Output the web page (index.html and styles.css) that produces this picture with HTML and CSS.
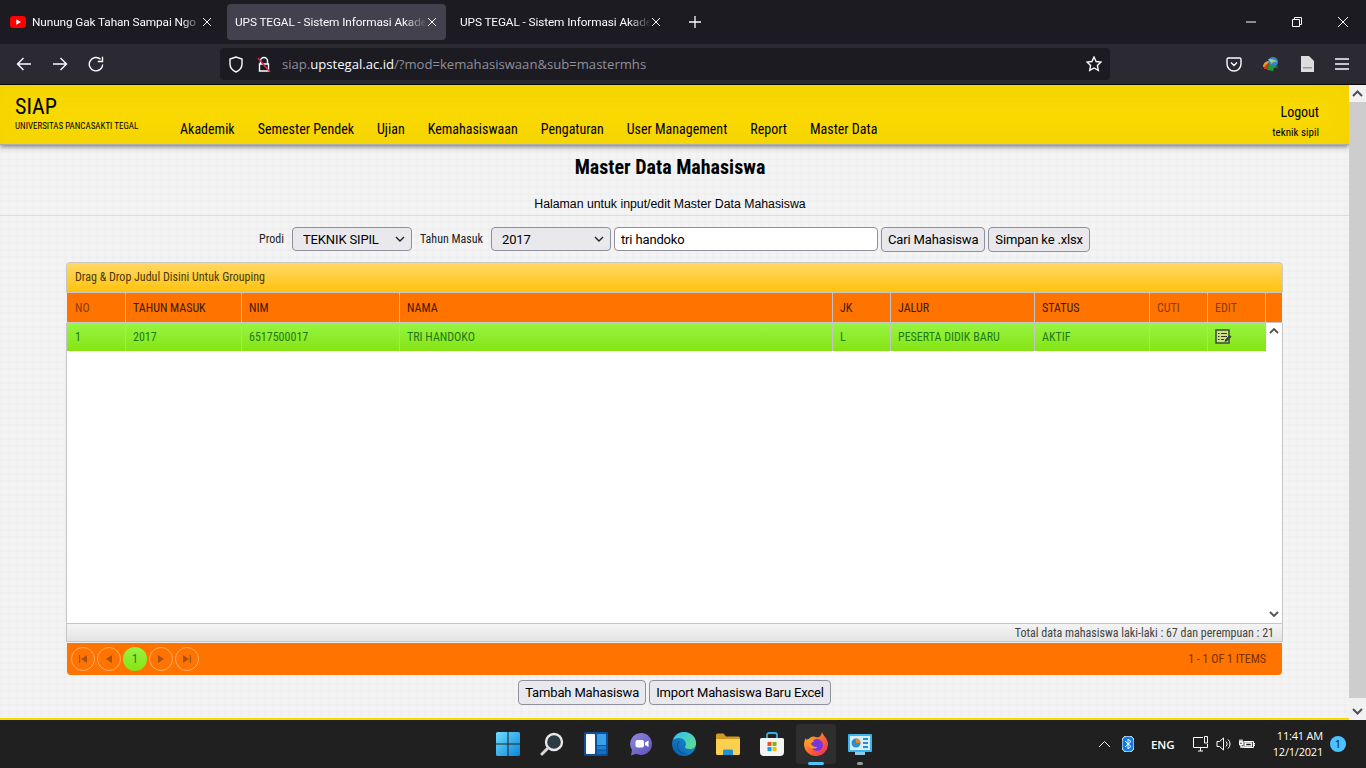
FILE: index.html
```html
<!DOCTYPE html>
<html lang="en">
<head>
  <meta charset="UTF-8">
  <title>UPS TEGAL - Sistem Informasi Akademik</title>
  <link rel="stylesheet" href="styles.css">
</head>
<body>
  <div class="tabbar">
    <div class="tab">
      <svg class="favicon" width="16" height="12" viewBox="0 0 16 12"><rect width="16" height="12" rx="3" fill="#f00"/><path d="M6.3 3.2 11 6l-4.7 2.800z" fill="#fff"/></svg>
      <span class="tab-text">Nunung Gak Tahan Sampai Ngo</span>
      <svg class="tab-close" width="10" height="10" viewBox="0 0 10 10"><path d="M1 1l8 8M9 1l-8 8"/></svg>
    </div>
    <div class="tab active">
      <span class="tab-text">UPS TEGAL - Sistem Informasi Akade</span>
      <svg class="tab-close" width="10" height="10" viewBox="0 0 10 10"><path d="M1 1l8 8M9 1l-8 8"/></svg>
    </div>
    <div class="tab">
      <span class="tab-text">UPS TEGAL - Sistem Informasi Akade</span>
      <svg class="tab-close" width="10" height="10" viewBox="0 0 10 10"><path d="M1 1l8 8M9 1l-8 8"/></svg>
    </div>
    <svg class="new-tab" width="14" height="14" viewBox="0 0 14 14"><path d="M7 1v12M1 7h12"/></svg>
    <div class="window-controls">
      <svg width="10" height="10" viewBox="0 0 10 10"><path d="M0 5h10"/></svg>
      <svg width="10" height="10" viewBox="0 0 10 10"><path d="M.5 2.500h7v7h-7zM2.500 2.500V.5h7v7H7.500"/></svg>
      <svg width="10" height="10" viewBox="0 0 10 10"><path d="M0 0l10 10M10 0L0 10"/></svg>
    </div>
  </div>

  <div class="toolbar">
    <div class="nav-buttons">
      <svg width="16" height="16" viewBox="0 0 16 16"><path d="M15 8H1.500M7.500 2 1.500 8l6 6"/></svg>
      <svg width="16" height="16" viewBox="0 0 16 16"><path d="M1 8h13.500M8.500 2l6 6-6 6"/></svg>
      <svg width="16" height="16" viewBox="0 0 16 16"><path d="M14.700 8.500A6.700 6.700 0 1 1 12.600 3.300"/><path d="M14.500 .8v4.700H9.800" class="solid"/></svg>
    </div>
    <div class="urlbar">
      <svg class="url-shield" width="16" height="17" viewBox="0 0 16 17"><path d="M8 1 2 3v5c0 4 2.500 6.500 6 8 3.500-1.500 6-4 6-8V3z"/></svg>
      <svg class="url-lock" width="16" height="17" viewBox="0 0 16 17"><path d="M4.500 8V5a3.500 3.500 0 0 1 7 0v3M3.500 8h9v7h-9z"/><path d="M2 2l12 14" class="slash"/></svg>
      <span class="url-text">siap.<b>upstegal.ac.id</b>/?mod=kemahasiswaan&amp;sub=mastermhs</span>
      <svg class="url-star" width="16" height="16" viewBox="0 0 16 16"><path d="M8 1l2.100 4.500 4.900.6-3.600 3.400.9 4.900L8 12l-4.300 2.400.9-4.900L1 6.100l4.900-.6z"/></svg>
    </div>
    <div class="tool-icons">
      <svg width="16" height="16" viewBox="0 0 16 16"><path d="M2.500 2h11A1.500 1.500 0 0 1 15 3.500V8a7 7 0 0 1-14 0V3.500A1.500 1.500 0 0 1 2.500 2zM5 6.500l3 3 3-3"/></svg>
      <svg width="18" height="16" viewBox="0 0 18 16" class="idm"><circle cx="11" cy="6" r="5" fill="#3f7fd0"/><path d="M6 3c4 0 8 1 9 3-3-.5-5 0-5 2z" fill="#9ed36a"/><path d="M1 11c0-4 3-6 6-6l-3 6z" fill="#e8a020"/><path d="M2 13c0-3 2-5 5-5l-2 5z" fill="#d03a2a"/><path d="M5 14 7 8l10 3-5 1-1 3z" fill="#1a9a3a"/></svg>
      <svg width="14" height="16" viewBox="0 0 14 16" class="file"><path d="M1 0h8l5 5v11H1z" fill="#ddd"/><rect x="3" y="11" width="9" height="1.500" fill="#999"/></svg>
      <svg width="16" height="12" viewBox="0 0 16 12"><path d="M1 1h14M1 6h14M1 11h14"/></svg>
    </div>
  </div>

  <div class="viewport">
    <div class="page">
      <header class="site-header">
        <div class="brand">
          <div class="brand-name">SIAP</div>
          <div class="brand-sub">UNIVERSITAS PANCASAKTI TEGAL</div>
        </div>
        <nav class="main-nav">
          <a>Akademik</a>
          <a>Semester Pendek</a>
          <a>Ujian</a>
          <a>Kemahasiswaan</a>
          <a>Pengaturan</a>
          <a>User Management</a>
          <a>Report</a>
          <a>Master Data</a>
        </nav>
        <div class="account">
          <div class="logout">Logout</div>
          <div class="user">teknik sipil</div>
        </div>
      </header>

      <main class="content">
        <h1 class="page-title">Master Data Mahasiswa</h1>
        <p class="page-sub">Halaman untuk input/edit Master Data Mahasiswa</p>
        <hr class="rule">

        <div class="filters">
          <label class="filter-label">Prodi</label>
          <select class="field-select"><option>TEKNIK SIPIL</option></select>
          <label class="filter-label">Tahun Masuk</label>
          <select class="field-select"><option>2017</option></select>
          <input class="field-input" type="text" value="tri handoko">
          <button class="btn">Cari Mahasiswa</button>
          <button class="btn">Simpan ke .xlsx</button>
        </div>

        <div class="grid">
          <div class="group-panel">Drag &amp; Drop Judul Disini Untuk Grouping</div>
          <div class="grid-head cols">
            <div class="dim">NO</div>
            <div>TAHUN MASUK</div>
            <div>NIM</div>
            <div>NAMA</div>
            <div>JK</div>
            <div>JALUR</div>
            <div>STATUS</div>
            <div class="dim">CUTI</div>
            <div class="dim">EDIT</div>
            <div></div>
          </div>
          <div class="grid-body">
            <div class="grid-rows">
              <div class="grid-row cols">
                <div>1</div>
                <div>2017</div>
                <div>6517500017</div>
                <div>TRI HANDOKO</div>
                <div>L</div>
                <div>PESERTA DIDIK BARU</div>
                <div>AKTIF</div>
                <div></div>
                <div>
                  <svg class="edit-icon" width="17" height="15" viewBox="0 0 17 15"><rect x="1" y="1" width="13" height="13" fill="#cfe27a" stroke="#3a4a3a" stroke-width="1.500"/><path d="M3 4.500h1.500M6 4.500h6M3 7.500h1.500M6 7.500h6M3 10.500h1.500M6 10.500h3" stroke="#2d3a2d"/><path d="M9.500 13l.7-2.500 4.500-4.500 1.800 1.800-4.500 4.500z" fill="#33423a"/></svg>
                </div>
              </div>
            </div>
            <div class="grid-scroll">
              <svg width="10" height="6" viewBox="0 0 10 6"><path d="M1 5l4-4 4 4"/></svg>
              <svg width="10" height="6" viewBox="0 0 10 6"><path d="M1 1l4 4 4-4"/></svg>
            </div>
          </div>
          <div class="grid-footer">Total data mahasiswa laki-laki : 67 dan perempuan : 21</div>
          <div class="pager">
            <div class="pager-btn"><svg width="10" height="10" viewBox="0 0 10 10"><path d="M1 1h1.200v8H1zM9 1v8L3 5z"/></svg></div>
            <div class="pager-btn"><svg width="10" height="10" viewBox="0 0 10 10"><path d="M8 1v8L2 5z"/></svg></div>
            <div class="pager-btn current">1</div>
            <div class="pager-btn"><svg width="10" height="10" viewBox="0 0 10 10"><path d="M2 1v8l6-4z"/></svg></div>
            <div class="pager-btn"><svg width="10" height="10" viewBox="0 0 10 10"><path d="M1 1v8l6-4zM7.800 1H9v8H7.800z"/></svg></div>
            <div class="pager-info">1 - 1 OF 1 ITEMS</div>
          </div>
        </div>

        <div class="actions">
          <button class="btn">Tambah Mahasiswa</button>
          <button class="btn">Import Mahasiswa Baru Excel</button>
        </div>
      </main>
      <div class="page-end"></div>
    </div>
    <div class="page-scroll">
      <div class="scroll-btn"><svg width="11" height="7" viewBox="0 0 11 7"><path d="M1 6l4.500-4.500L10 6"/></svg></div>
      <div class="scroll-thumb"></div>
      <div class="scroll-btn"><svg width="11" height="7" viewBox="0 0 11 7"><path d="M1 1l4.500 4.500L10 1"/></svg></div>
    </div>
  </div>

  <div class="taskbar">
    <div></div>
    <div class="task-icons">
      <div class="task-icon">
        <svg width="24" height="24" viewBox="0 0 24 24"><defs><linearGradient id="win" x1="0" y1="0" x2="1" y2="1"><stop offset="0" stop-color="#6fdcff"/><stop offset="1" stop-color="#0a84d8"/></linearGradient></defs><path d="M0 1.500A1.500 1.500 0 0 1 1.500 0h10v11.500H0zM12.500 0h10A1.500 1.500 0 0 1 24 1.500v10H12.500zM0 12.500h11.500V24h-10A1.500 1.500 0 0 1 0 22.500zM12.500 12.500H24v10a1.500 1.500 0 0 1-1.500 1.500h-10z" fill="url(#win)"/></svg>
      </div>
      <div class="task-icon">
        <svg width="24" height="24" viewBox="0 0 24 24"><circle cx="14" cy="10" r="8" fill="#2c3a44" stroke="#e8e8e8" stroke-width="2.400"/><path d="M8 16 2 22" stroke="#d8d8d8" stroke-width="3" stroke-linecap="round"/></svg>
      </div>
      <div class="task-icon">
        <svg width="24" height="24" viewBox="0 0 24 24"><rect width="24" height="24" rx="2" fill="#0f4f9c"/><rect x="2" y="2" width="9" height="20" rx="1" fill="#fff"/><rect x="13" y="2" width="9" height="11" fill="#3aa0e8"/><rect x="13" y="14" width="9" height="3.500" fill="#1c82d8"/><rect x="13" y="18.500" width="9" height="3.500" fill="#1570c0"/></svg>
      </div>
      <div class="task-icon">
        <svg width="24" height="24" viewBox="0 0 24 24"><defs><linearGradient id="chat" x1="0" y1="0" x2="1" y2="1"><stop offset="0" stop-color="#8f8ae0"/><stop offset="1" stop-color="#5b50b8"/></linearGradient></defs><path d="M13 1a11 11 0 1 1-5 20.800L3 23.500l1-5.500A11 11 0 0 1 13 1z" fill="url(#chat)"/><rect x="7.500" y="8" width="8.500" height="7.500" rx="2" fill="#fff"/><path d="M17 10.500l3.500-2v6.500L17 13z" fill="#fff"/></svg>
      </div>
      <div class="task-icon">
        <svg width="24" height="24" viewBox="0 0 24 24"><defs><linearGradient id="edgeA" x1="0" y1="1" x2="1" y2="0"><stop offset="0" stop-color="#0c59a4"/><stop offset="1" stop-color="#1b9de2"/></linearGradient><linearGradient id="edgeB" x1="0" y1="0" x2="1" y2="1"><stop offset="0" stop-color="#35c1f1"/><stop offset="1" stop-color="#5fe08a"/></linearGradient></defs><circle cx="12" cy="12" r="12" fill="url(#edgeA)"/><path d="M1 8C3 2 8 0 12 0c7 0 12 5 12 11 0 4-3 6-6 6-3 0-5-1-5-2 0-.5 1-1 1-3 0-3-3-6-7-6-3 0-5 1-6 2z" fill="url(#edgeB)"/><path d="M9 9c-3 1-4 4-3 7s5 6 9 6c-5 1-10-3-10-9 0-2 2-4 4-4z" fill="#0a3f80"/></svg>
      </div>
      <div class="task-icon">
        <svg width="24" height="22" viewBox="0 0 24 22"><path d="M0 2a1.500 1.500 0 0 1 1.500-1.500h6L10 3.500h12.500A1.500 1.500 0 0 1 24 5v2H0z" fill="#d09b20"/><path d="M0 6h24v14.500a1.500 1.500 0 0 1-1.500 1.500h-21A1.500 1.500 0 0 1 0 20.500z" fill="#fbd04e"/><path d="M7 22v-4a1.500 1.500 0 0 1 1.500-1.500h7A1.500 1.500 0 0 1 17 18v4z" fill="#1e8fd8"/></svg>
      </div>
      <div class="task-icon">
        <svg width="24" height="24" viewBox="0 0 24 24"><path d="M7 6V3a2 2 0 0 1 2-2h6a2 2 0 0 1 2 2v3" fill="none" stroke="#2fb0ea" stroke-width="1.800"/><path d="M0 7.500A1.500 1.500 0 0 1 1.500 6h21A1.500 1.500 0 0 1 24 7.500V20a4 4 0 0 1-4 4H4a4 4 0 0 1-4-4z" fill="#f4f4f4"/><rect x="7.500" y="10" width="4" height="4" fill="#f05023"/><rect x="12.500" y="10" width="4" height="4" fill="#7fba00"/><rect x="7.500" y="15" width="4" height="4" fill="#00a4ef"/><rect x="12.500" y="15" width="4" height="4" fill="#ffb900"/></svg>
      </div>
      <div class="task-icon running">
        <svg width="24" height="24" viewBox="0 0 24 24"><defs><linearGradient id="fox" x1="0" y1="0" x2="1" y2="1"><stop offset="0" stop-color="#ffc52e"/><stop offset=".5" stop-color="#ff6a2a"/><stop offset="1" stop-color="#e9206e"/></linearGradient></defs><path d="M18 0c.8 3 5 6 6 11a12 12 0 1 1-24 2c0-3 1-6 2-7 0 1.500.6 2.500 1.500 3C5 5 9 3.500 12 5c2 1 5 0 6-5z" fill="url(#fox)"/><circle cx="13" cy="13" r="6" fill="#7a35d8"/><path d="M2.500 7.500c3-1 6.500-.5 7.500 2L6.500 11c1 3 4 4.500 7 4-3.500 3.500-12 1-11-7.500z" fill="#ff9a1f"/></svg>
      </div>
      <div class="task-icon open">
        <svg width="24" height="21" viewBox="0 0 24 21"><rect width="24" height="18" rx="1" fill="#3db4ea"/><rect x="2" y="2" width="20" height="14" fill="#d5eefa"/><circle cx="8" cy="9" r="4.500" fill="#2a8fd0"/><path d="M8 9V4.500A4.500 4.500 0 0 1 12.500 9z" fill="#e98a1f"/><rect x="15" y="4" width="5" height="2" fill="#2a8fd0"/><rect x="15" y="8" width="5" height="2" fill="#2a8fd0"/><rect x="15" y="12" width="5" height="2" fill="#2a8fd0"/><rect x="7" y="18" width="10" height="3" fill="#8ccbe8"/></svg>
      </div>
    </div>
    <div class="tray">
      <svg class="tray-chevron" width="13" height="8" viewBox="0 0 13 8"><path d="M1 7l5.500-5.500L12 7"/></svg>
      <svg class="tray-bt" width="12" height="16" viewBox="0 0 12 16"><rect width="12" height="16" rx="5" fill="#0a7ce8"/><path d="M3 5l6 5.500L6 13V3l3 2.500L3 11" fill="none" stroke="#fff"/></svg>
      <span class="tray-lang">ENG</span>
      <svg class="tray-net" width="16" height="16" viewBox="0 0 16 16"><path d="M10 1.500H.5v10h14V8M5 15h5M7.500 11.500V15M11.500.5h3v6.500h-3z"/></svg>
      <svg class="tray-sound" width="16" height="14" viewBox="0 0 16 14"><path d="M1 4.500h2.500L7.500 1v12L3.500 9.500H1zM10 4.500a3.500 3.500 0 0 1 0 5M12 2.500a6 6 0 0 1 0 9"/></svg>
      <svg class="tray-power" width="16" height="12" viewBox="0 0 16 12"><path d="M5 3.500h9.500v6H5zM14.500 5.500H16v2h-1.500z"/><path d="M6.500 5h6v3h-6zM.5 4h3v2.500h-3zM1 1.500V4M3 1.500V4M2 6.500V9h3" class="solid"/></svg>
      <div class="clock"><div>11:41 AM</div><div>12/1/2021</div></div>
      <div class="notif">1</div>
    </div>
  </div>
</body>
</html>
```

FILE: styles.css
```css
* {
  box-sizing: border-box;
}
html, body {
  margin: 0;
  height: 100%;
  overflow: hidden;
}
body {
  display: flex;
  flex-direction: column;
  height: 768px;
  background-color: #202020;
  font-family: 'Roboto', sans-serif;
  color: #000;
}
svg {
  display: block;
  flex: none;
}

/* browser chrome */
.tabbar {
  display: flex;
  align-items: center;
  height: 44px;
  background-color: #1c1b22;
  color: #fbfbfe;
  font-size: 11.800px;
  letter-spacing: -0.1px;
  padding-left: 2px;
}
.tab {
  display: flex;
  align-items: center;
  width: 225px;
  height: 36px;
  padding: 0 13px 0 11px;
  border-radius: 4px;
}
.tab.active {
  background-color: #42414d;
  width: 219px;
  margin: 0 3px 0 0;
  padding: 0 9px 0 8px;
}
.tab:first-child {
  padding: 0 12px 0 8px;
  width: 222px;
  margin-right: 3px;
}
.favicon {
  margin-right: 6px;
}
.tab-text {
  flex: 1;
  overflow: hidden;
  white-space: nowrap;
  -webkit-mask-image: linear-gradient(to right, #000 88%, transparent);
  mask-image: linear-gradient(to right, #000 88%, transparent);
}
.tab-close {
  fill: none;
  stroke: #fbfbfe;
  stroke-width: 1;
}
.new-tab {
  margin-left: 14px;
  fill: none;
  stroke: #fbfbfe;
  stroke-width: 1.300;
}
.window-controls {
  margin-left: auto;
  display: flex;
  gap: 36px;
  padding-right: 18px;
  fill: none;
  stroke: #fff;
  stroke-width: 1;
}
.toolbar {
  display: flex;
  align-items: center;
  height: 41px;
  background-color: #2b2a33;
  border-bottom: 1px solid #0c0c0d;
  fill: none;
  stroke: #fbfbfe;
  stroke-width: 1.400;
}
.nav-buttons {
  display: flex;
  gap: 20px;
  width: 220px;
  padding-left: 16px;
}
.solid {
  stroke-width: 1.400;
}
.urlbar {
  display: flex;
  align-items: center;
  width: 890px;
  height: 32px;
  padding: 0 8px;
  background-color: #1c1b22;
  border-radius: 4px;
}
.url-lock {
  margin-left: 12px;
}
.slash {
  stroke: #e22850;
}
.url-text {
  flex: 1;
  margin-left: 10px;
  font-family: 'Open Sans', sans-serif;
  font-size: 13.100px;
  color: #8f8f9d;
  white-space: nowrap;
}
.url-text b {
  font-weight: 400;
  color: #fbfbfe;
}
.tool-icons {
  display: flex;
  align-items: center;
  justify-content: space-between;
  flex: 1;
  padding: 0 16px 0 116px;
}
.idm, .file {
  stroke: none;
}

/* page */
.viewport {
  display: flex;
  height: 635px;
}
.page {
  display: flex;
  flex-direction: column;
  flex: 1;
  background-color: #f4f4f4;
  background-image:
    repeating-linear-gradient(0deg, rgba(0, 0, 0, 0.01) 0 2px, transparent 2px 7px),
    repeating-linear-gradient(90deg, rgba(0, 0, 0, 0.01) 0 3px, transparent 3px 8px);
}
.site-header {
  display: flex;
  align-items: flex-end;
  height: 60px;
  padding: 0 30px 0 15px;
  background-color: #f9d900;
  border-bottom: 1px solid #aaa;
  box-shadow: 0 2px 5px rgba(0, 0, 0, 0.45), inset 0 0 30px rgba(215, 170, 0, 0.18);
  font-stretch: 75%;
}
.brand {
  align-self: flex-start;
  width: 165px;
  padding-top: 10px;
}
.brand-name {
  font-size: 22px;
  line-height: 24px;
}
.brand-sub {
  font-size: 9px;
  line-height: 15px;
}
.main-nav {
  display: flex;
  gap: 23px;
  padding-bottom: 6px;
  font-size: 14px;
  line-height: 17px;
}
.account {
  margin-left: auto;
  padding-bottom: 5px;
  text-align: right;
}
.logout {
  font-size: 14px;
  line-height: 18px;
  margin-bottom: 5px;
}
.user {
  font-size: 11px;
  line-height: 13px;
}
.content {
  display: flex;
  flex-direction: column;
  flex: 1;
}
.page-title {
  margin: 10px 9px 0 0;
  font-size: 20px;
  line-height: 24px;
  font-weight: 700;
  font-stretch: 75%;
  text-align: center;
}
.page-sub {
  margin: 17px 9px 0 0;
  font-family: 'Liberation Sans', sans-serif;
  font-size: 12.300px;
  line-height: 16px;
  text-align: center;
}
.rule {
  width: 100%;
  margin: 3px 0 0;
  border: 0;
  border-top: 1px solid #dcdcdc;
}
.filters {
  display: flex;
  align-items: center;
  justify-content: center;
  height: 24px;
  margin-top: 11px;
}
.filter-label {
  font-size: 12px;
  font-stretch: 75%;
  color: #222;
  margin: 0 8px;
}
.filter-label:first-child {
  margin-left: 0;
}
.field-select {
  appearance: none;
  width: 120px;
  height: 24px;
  padding: 0 10px;
  font-family: 'Roboto', sans-serif;
  font-size: 13px;
  letter-spacing: -0.15px;
  color: #000;
  background-color: #e9e9ed;
  background-image: url("data:image/svg+xml,%3Csvg xmlns='http://www.w3.org/2000/svg' width='10' height='6'%3E%3Cpath d='M1 1l4 4 4-4' fill='none' stroke='%23222' stroke-width='1.400'/%3E%3C/svg%3E");
  background-repeat: no-repeat;
  background-position: right 6px center;
  border: 1px solid #8f8f9d;
  border-radius: 4px;
}
.field-input {
  width: 264px;
  height: 24px;
  margin: 0 3px;
  padding: 0 6px;
  font-family: 'Roboto', sans-serif;
  font-size: 13px;
  letter-spacing: -0.15px;
  color: #000;
  background-color: #fff;
  border: 1px solid #8f8f9d;
  border-radius: 4px;
}
.btn {
  height: 25px;
  padding: 0 6px;
  margin-right: 3px;
  font-family: 'Roboto', sans-serif;
  font-size: 13px;
  letter-spacing: -0.15px;
  color: #000;
  background-color: #e9e9ed;
  border: 1px solid #8f8f9d;
  border-radius: 4px;
  white-space: nowrap;
}
.btn:last-child {
  margin-right: 0;
}

/* grid */
.grid {
  display: flex;
  flex-direction: column;
  width: 1217px;
  margin: 11px auto 0;
  font-stretch: 75%;
}
.group-panel {
  height: 31px;
  padding-left: 8px;
  font-size: 12px;
  line-height: 29px;
  color: #4a3a10;
  background-image: linear-gradient(#ffd966, #ffc20c);
  border: 1px solid #c8c8c8;
  border-radius: 4px 4px 0 0;
}
.cols {
  display: grid;
  grid-template-columns: 59px 116px 158px 433px 58px 144px 115px 58px 58px 16px;
}
.cols > div {
  padding-left: 7px;
  overflow: hidden;
  white-space: nowrap;
  border-right: 1px solid #c5c5c5;
}
.cols > div:first-child {
  padding-left: 8px;
}
.grid-head {
  height: 30px;
  margin: 0 1px;
  background-color: #ff7300;
  font-size: 12px;
  line-height: 30px;
  color: #3c1a00;
  border-bottom: 1px solid #c5c5c5;
}
.grid-head > div:last-child {
  border-right: 0;
}
.grid-head .dim {
  color: #8a3c00;
}
.grid-body {
  display: flex;
  height: 301px;
  background-color: #fff;
  border: 1px solid #c5c5c5;
  border-top: 0;
}
.grid-rows {
  flex: 1;
}
.grid-row {
  grid-template-columns: 59px 116px 158px 433px 58px 144px 115px 58px 58px;
  height: 28px;
  font-size: 12px;
  line-height: 28px;
  color: #1e7a1e;
  background-image: linear-gradient(#96f542, #86e414);
}
.grid-row > div:last-child {
  border-right: 0;
  padding-top: 6px;
}
.grid-scroll {
  display: flex;
  flex-direction: column;
  justify-content: space-between;
  align-items: center;
  width: 16px;
  padding: 5px 0 6px;
  fill: none;
  stroke: #505050;
  stroke-width: 1.800;
}
.grid-footer {
  height: 18px;
  padding-right: 8px;
  font-size: 12px;
  line-height: 19px;
  text-align: right;
  color: #444;
  background-image: linear-gradient(#f4f4f4, #e4e4e4);
  border: 1px solid #c5c5c5;
  border-top: 0;
}
.pager {
  display: flex;
  align-items: center;
  height: 32px;
  margin: 1px 1px 0;
  padding: 0 16px 0 4px;
  background-color: #ff7300;
  border-radius: 0 0 4px 4px;
}
.pager-btn {
  display: flex;
  align-items: center;
  justify-content: center;
  width: 24px;
  height: 24px;
  margin-right: 2px;
  border: 1px solid rgba(255, 255, 255, 0.4);
  border-radius: 50%;
  fill: #a75216;
}
.pager-btn.current {
  border: 0;
  font-size: 12px;
  color: #1e7a1e;
  background-image: linear-gradient(#96f542, #86e414);
}
.pager-info {
  margin-left: auto;
  font-size: 12px;
  color: #7a3000;
}
.actions {
  display: flex;
  justify-content: center;
  margin-top: 5px;
}
.page-end {
  height: 2px;
  margin-top: auto;
  background-color: #f9d900;
}
.page-scroll {
  display: flex;
  flex-direction: column;
  width: 17px;
  background-color: #f1f1f1;
  fill: none;
  stroke: #505050;
  stroke-width: 2;
}
.scroll-btn {
  display: flex;
  align-items: center;
  justify-content: center;
  height: 17px;
}
.scroll-thumb {
  flex: 1;
  margin-bottom: 5px;
  background-color: #cdcdcd;
}

/* taskbar */
.taskbar {
  display: grid;
  grid-template-columns: 1fr auto 1fr;
  flex: 1;
  background-color: #202020;
  color: #fff;
  font-family: 'Open Sans', sans-serif;
}
.task-icons {
  display: flex;
  align-items: center;
  margin-left: 2px;
}
.task-icon {
  position: relative;
  display: flex;
  align-items: center;
  justify-content: center;
  width: 44px;
  height: 48px;
}
.task-icon.running::before {
  content: "";
  position: absolute;
  top: 4px;
  left: 2px;
  width: 40px;
  height: 40px;
  background-color: #2e2e2e;
  border-radius: 4px;
  z-index: 0;
}
.task-icon.running svg {
  position: relative;
}
.task-icon.running::after {
  content: "";
  position: absolute;
  bottom: 3px;
  left: 14px;
  width: 16px;
  height: 3px;
  background-color: #4cc2ff;
  border-radius: 2px;
}
.task-icon.open::after {
  content: "";
  position: absolute;
  bottom: 3px;
  left: 19px;
  width: 6px;
  height: 3px;
  background-color: #9a9a9a;
  border-radius: 2px;
}
.tray {
  display: flex;
  align-items: center;
  justify-content: flex-end;
  padding-right: 20px;
  fill: none;
  stroke: #fff;
  stroke-width: 1;
}
.tray-chevron {
  margin-right: 11px;
}
.tray-lang {
  margin: 0 18px 0 17px;
  font-size: 11.500px;
  font-weight: 600;
}
.tray-sound {
  margin: 0 0 0 7px;
}
.tray-power {
  margin-left: 7px;
}
.clock {
  margin-left: 18px;
  font-size: 11px;
  letter-spacing: -0.2px;
  line-height: 16px;
  text-align: right;
}
.notif {
  width: 16px;
  height: 16px;
  margin-left: 7px;
  font-size: 11px;
  line-height: 16px;
  text-align: center;
  color: #111;
  background-color: #4cc2ff;
  border-radius: 50%;
}
```
